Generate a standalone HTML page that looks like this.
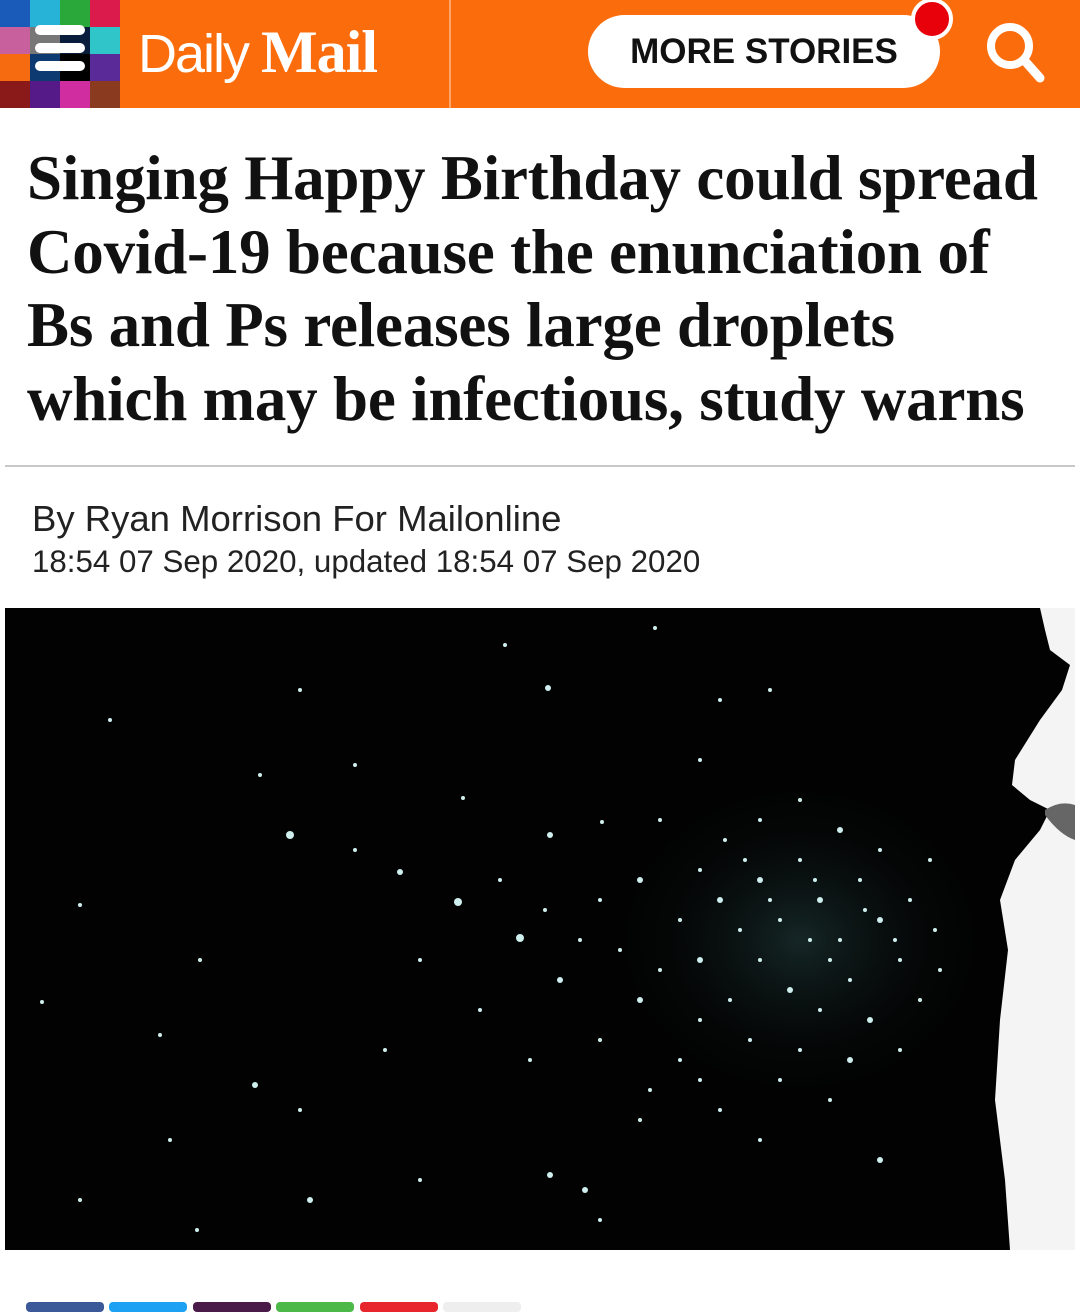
<!DOCTYPE html>
<html><head><meta charset="utf-8"><style>
*{margin:0;padding:0;box-sizing:border-box}
body{width:1080px;height:1308px;background:#fff;position:relative;overflow:hidden;font-family:"Liberation Sans",sans-serif}
.hdr{position:absolute;left:0;top:0;width:1080px;height:108px;background:#fb6c0c}
.grid{position:absolute;left:0;top:0;width:120px;height:108px;display:grid;grid-template-columns:repeat(4,30px);grid-template-rows:repeat(4,27px)}
.bar{position:absolute;left:35px;width:50px;height:10px;background:#fff;border-radius:5px}
.logo{position:absolute;left:138px;top:18px;color:#fff;font-size:54px;letter-spacing:-2px;white-space:nowrap}
.logo b{font-family:"Liberation Serif",serif;font-size:60px;letter-spacing:-1px}
.div{position:absolute;left:449px;top:0;width:2px;height:108px;background:#fda468}
.pill{position:absolute;left:588px;top:15px;width:352px;height:73px;background:#fff;border-radius:37px;font-weight:bold;font-size:35px;text-align:center;line-height:73px;color:#111}
.dot{position:absolute;left:911px;top:-2px;width:42px;height:42px;border-radius:50%;background:#e8000b;border:4px solid #fff}
h1{position:absolute;left:27px;top:142px;font-family:"Liberation Serif",serif;font-weight:bold;font-size:63px;line-height:73.5px;letter-spacing:-0.2px;color:#111;white-space:nowrap}
.rule{position:absolute;left:5px;top:465px;width:1070px;height:2px;background:#c8c8c8}
.by{position:absolute;left:32px;top:498px;font-size:36.5px;color:#222}
.dt{position:absolute;left:32px;top:544px;font-size:31.3px;color:#222}
.img{position:absolute;left:5px;top:608px;width:1070px;height:642px;background:#020202}
</style></head><body>
<div class="hdr">
<div class="grid">
<div style="background:#1a5ab8"></div><div style="background:#27b3d8"></div><div style="background:#2aa83a"></div><div style="background:#da1b4c"></div>
<div style="background:#c8609e"></div><div style="background:#777"></div><div style="background:#0a1c3c"></div><div style="background:#30c5c8"></div>
<div style="background:#f66a10"></div><div style="background:#0d3a70"></div><div style="background:#000"></div><div style="background:#5a2a98"></div>
<div style="background:#8a1a1a"></div><div style="background:#561a88"></div><div style="background:#d02da0"></div><div style="background:#8a3a1e"></div>
</div>
<div class="bar" style="top:25px"></div><div class="bar" style="top:43px"></div><div class="bar" style="top:61px"></div>
<div class="logo">Daily <b>Mail</b></div>
<div class="div"></div>
<div class="pill">MORE STORIES</div>
<div class="dot"></div>
<svg style="position:absolute;left:980px;top:16px" width="70" height="70" viewBox="0 0 70 70"><circle cx="30" cy="30" r="19" fill="none" stroke="#fff" stroke-width="8"/><line x1="44" y1="44" x2="60" y2="62" stroke="#fff" stroke-width="9" stroke-linecap="round"/></svg>
</div>
<h1>Singing Happy Birthday could spread<br>Covid-19 because the enunciation of<br>Bs and Ps releases large droplets<br>which may be infectious, study warns</h1>
<div class="rule"></div>
<div class="by">By Ryan Morrison For Mailonline</div>
<div class="dt">18:54 07 Sep 2020, updated 18:54 07 Sep 2020</div>
<div class="img">
<svg width="1070" height="642" viewBox="5 608 1070 642">
<defs><radialGradient id="g" cx="0.5" cy="0.5" r="0.5"><stop offset="0" stop-color="#3a6a6a" stop-opacity=".35"/><stop offset="1" stop-color="#000" stop-opacity="0"/></radialGradient></defs>
<ellipse cx="800" cy="940" rx="200" ry="170" fill="url(#g)"/>
<g fill="#cfeeee">
<circle cx="505" cy="645" r="2"/><circle cx="548" cy="688" r="3"/><circle cx="655" cy="628" r="2"/><circle cx="720" cy="700" r="2"/><circle cx="770" cy="690" r="2"/><circle cx="260" cy="775" r="2"/><circle cx="290" cy="835" r="4"/><circle cx="355" cy="765" r="2"/><circle cx="400" cy="872" r="3"/><circle cx="458" cy="902" r="4"/><circle cx="463" cy="798" r="2"/><circle cx="520" cy="938" r="4"/><circle cx="550" cy="835" r="3"/><circle cx="602" cy="822" r="2"/><circle cx="640" cy="880" r="3"/><circle cx="560" cy="980" r="3"/><circle cx="600" cy="1040" r="2"/><circle cx="530" cy="1060" r="2"/><circle cx="480" cy="1010" r="2"/><circle cx="420" cy="960" r="2"/><circle cx="385" cy="1050" r="2"/><circle cx="255" cy="1085" r="3"/><circle cx="160" cy="1035" r="2"/><circle cx="42" cy="1002" r="2"/><circle cx="80" cy="905" r="2"/><circle cx="200" cy="960" r="2"/><circle cx="300" cy="1110" r="2"/><circle cx="197" cy="1230" r="2"/><circle cx="310" cy="1200" r="3"/><circle cx="420" cy="1180" r="2"/><circle cx="550" cy="1175" r="3"/><circle cx="585" cy="1190" r="3"/><circle cx="640" cy="1120" r="2"/><circle cx="700" cy="1080" r="2"/><circle cx="880" cy="1160" r="3"/><circle cx="760" cy="1140" r="2"/><circle cx="600" cy="1220" r="2"/><circle cx="110" cy="720" r="2"/><circle cx="300" cy="690" r="2"/><circle cx="170" cy="1140" r="2"/><circle cx="80" cy="1200" r="2"/><circle cx="355" cy="850" r="2"/><circle cx="700" cy="760" r="2"/><circle cx="660" cy="820" r="2"/>
<circle cx="700" cy="870" r="2"/><circle cx="720" cy="900" r="3"/><circle cx="740" cy="930" r="2"/><circle cx="760" cy="880" r="3"/><circle cx="780" cy="920" r="2"/><circle cx="800" cy="860" r="2"/><circle cx="820" cy="900" r="3"/><circle cx="840" cy="940" r="2"/><circle cx="860" cy="880" r="2"/><circle cx="880" cy="920" r="3"/><circle cx="900" cy="960" r="2"/><circle cx="760" cy="960" r="2"/><circle cx="790" cy="990" r="3"/><circle cx="820" cy="1010" r="2"/><circle cx="850" cy="980" r="2"/><circle cx="870" cy="1020" r="3"/><circle cx="730" cy="1000" r="2"/><circle cx="700" cy="960" r="3"/><circle cx="680" cy="920" r="2"/><circle cx="660" cy="970" r="2"/><circle cx="640" cy="1000" r="3"/><circle cx="620" cy="950" r="2"/><circle cx="600" cy="900" r="2"/><circle cx="760" cy="820" r="2"/><circle cx="800" cy="800" r="2"/><circle cx="840" cy="830" r="3"/><circle cx="880" cy="850" r="2"/><circle cx="910" cy="900" r="2"/><circle cx="920" cy="1000" r="2"/><circle cx="900" cy="1050" r="2"/><circle cx="850" cy="1060" r="3"/><circle cx="800" cy="1050" r="2"/><circle cx="750" cy="1040" r="2"/><circle cx="700" cy="1020" r="2"/><circle cx="680" cy="1060" r="2"/><circle cx="810" cy="940" r="2"/><circle cx="830" cy="960" r="2"/><circle cx="770" cy="900" r="2"/><circle cx="745" cy="860" r="2"/><circle cx="725" cy="840" r="2"/><circle cx="815" cy="880" r="2"/><circle cx="865" cy="910" r="2"/><circle cx="895" cy="940" r="2"/><circle cx="935" cy="930" r="2"/><circle cx="940" cy="970" r="2"/><circle cx="930" cy="860" r="2"/><circle cx="780" cy="1080" r="2"/><circle cx="830" cy="1100" r="2"/><circle cx="720" cy="1110" r="2"/><circle cx="650" cy="1090" r="2"/><circle cx="580" cy="940" r="2"/><circle cx="545" cy="910" r="2"/><circle cx="500" cy="880" r="2"/>
</g>
<path d="M1040 608 L1075 608 L1075 1250 L1010 1250 L1005 1180 L995 1100 L1000 1020 L1008 950 L1000 900 L1015 860 L1040 830 L1050 810 L1030 800 L1012 785 L1015 760 L1040 720 L1062 690 L1070 665 L1050 650 L1045 630 Z" fill="#f4f4f4"/>
<path d="M1045 810 Q1060 800 1075 805 L1075 840 Q1060 835 1045 815 Z" fill="#666"/>
</svg>
</div>
<div style="position:absolute;top:1302px;left:26px;width:78px;height:10px;background:#3b5998;border-radius:4px"></div>
<div style="position:absolute;top:1302px;left:109px;width:78px;height:10px;background:#1da1f2;border-radius:4px"></div>
<div style="position:absolute;top:1302px;left:193px;width:78px;height:10px;background:#4a1a48;border-radius:4px"></div>
<div style="position:absolute;top:1302px;left:276px;width:78px;height:10px;background:#4cb848;border-radius:4px"></div>
<div style="position:absolute;top:1302px;left:360px;width:78px;height:10px;background:#e8242c;border-radius:4px"></div>
<div style="position:absolute;top:1302px;left:443px;width:78px;height:10px;background:#eee;border-radius:4px"></div>
</body></html>
